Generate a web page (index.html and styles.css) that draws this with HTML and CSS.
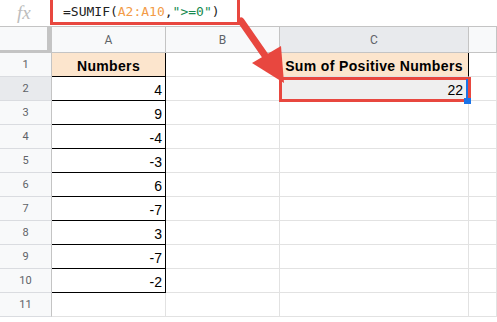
FILE: index.html
```html
<!DOCTYPE html>
<html>
<head>
<meta charset="utf-8">
<link rel="stylesheet" href="styles.css">
</head>
<body>
<div class="sheet">
  <div class="fbar">
    <span class="fx">fx</span>
    <span class="formula">=SUMIF(<span class="rng">A2:A10</span>,<span class="str">"&gt;=0"</span>)</span>
  </div>
  <div class="grid">
    <div class="corner"></div>
    <div class="hd">A</div>
    <div class="hd">B</div>
    <div class="hd sel">C</div>
    <div class="hd"></div>

    <div class="rn">1</div>
    <div class="c a peach">Numbers</div>
    <div class="c bk-r"></div>
    <div class="c peach bk-r">Sum of Positive Numbers</div>
    <div class="c"></div>

    <div class="rn sel">2</div>
    <div class="c a">4</div>
    <div class="c"></div>
    <div class="c res">22</div>
    <div class="c"></div>

    <div class="rn">3</div><div class="c a">9</div><div class="c"></div><div class="c"></div><div class="c"></div>
    <div class="rn">4</div><div class="c a">-4</div><div class="c"></div><div class="c"></div><div class="c"></div>
    <div class="rn">5</div><div class="c a">-3</div><div class="c"></div><div class="c"></div><div class="c"></div>
    <div class="rn">6</div><div class="c a">6</div><div class="c"></div><div class="c"></div><div class="c"></div>
    <div class="rn">7</div><div class="c a">-7</div><div class="c"></div><div class="c"></div><div class="c"></div>
    <div class="rn">8</div><div class="c a">3</div><div class="c"></div><div class="c"></div><div class="c"></div>
    <div class="rn">9</div><div class="c a">-7</div><div class="c"></div><div class="c"></div><div class="c"></div>
    <div class="rn">10</div><div class="c a">-2</div><div class="c"></div><div class="c"></div><div class="c"></div>
    <div class="rn">11</div><div class="c"></div><div class="c"></div><div class="c"></div><div class="c"></div>
  </div>

  <div class="hl-formula"></div>
  <div class="hl-cell"></div>
  <div class="sel-line"></div>
  <div class="sel-handle"></div>
  <svg class="arrow" width="497" height="322" viewBox="0 0 497 322">
    <line x1="241" y1="21" x2="266" y2="57" stroke="#e8473f" stroke-width="7" stroke-linecap="round"/>
    <polygon points="252,63 281,46 284,83" fill="#e8473f"/>
  </svg>
</div>
</body>
</html>
```

FILE: styles.css
```css
html, body {
  margin: 0;
  padding: 0;
  background: #ffffff;
}

.sheet {
  position: relative;
  width: 497px;
  height: 322px;
  overflow: hidden;
  font-family: "Liberation Sans", Arial, sans-serif;
}

.fbar {
  height: 26px;
  border-bottom: 1px solid #c4c4c4;
  display: flex;
  align-items: center;
  background: #ffffff;
}

.fx {
  width: 63px;
  padding-left: 17px;
  box-sizing: border-box;
  font-family: "Liberation Serif", serif;
  font-style: italic;
  font-size: 19px;
  color: #bdbdbd;
  line-height: 26px;
}

.formula {
  font-family: "DejaVu Sans Mono", monospace;
  font-size: 13px;
  color: #222222;
  line-height: 26px;
  margin-top: -2px;
}

.rng { color: #f39b47; }
.str { color: #178a4f; }

.grid {
  display: grid;
  grid-template-columns: 52px 114px 114px 189px 1fr;
  grid-template-rows: 26px;
  grid-auto-rows: 24px;
}

.corner {
  background: #f8f9fa;
  border-right: 5px solid #c4c4c4;
  border-bottom: 3px solid #c4c4c4;
  box-sizing: border-box;
}

.hd {
  background: #f8f9fa;
  border-right: 1px solid #c4c4c4;
  border-bottom: 1px solid #c4c4c4;
  box-sizing: border-box;
  display: flex;
  align-items: center;
  justify-content: center;
  font-family: Roboto, "Liberation Sans", sans-serif;
  font-size: 12px;
  color: #5f6368;
  padding-top: 1px;
}

.hd.sel { background: #e8eaed; }

.rn {
  background: #f8f9fa;
  border-right: 1px solid #c4c4c4;
  border-bottom: 1px solid #dadce0;
  box-sizing: border-box;
  display: flex;
  align-items: center;
  justify-content: center;
  font-family: Roboto, "Liberation Sans", sans-serif;
  font-size: 11px;
  color: #5f6368;
}

.rn.sel { background: #e8eaed; }

.c {
  border-right: 1px solid #e2e2e2;
  border-bottom: 1px solid #e2e2e2;
  box-sizing: border-box;
  display: flex;
  align-items: center;
  justify-content: flex-end;
  padding: 2px 3px 0 3px;
  font-size: 14px;
  color: #000000;
}

.a {
  border-right: 1px solid #000000;
  border-bottom: 1px solid #000000;
}

.bk-r { border-right: 1px solid #000000; }

.peach {
  background: #fce5cd;
  font-weight: bold;
  justify-content: center;
  font-size: 14px;
  letter-spacing: 0.35px;
}

.res {
  background: #efefef;
  padding-right: 5px;
}

.hl-formula {
  position: absolute;
  left: 50px;
  top: -4px;
  width: 190px;
  height: 29px;
  border: 3px solid #e8473f;
  box-sizing: border-box;
}

.hl-cell {
  position: absolute;
  left: 279px;
  top: 77px;
  width: 192px;
  height: 25px;
  border: 3px solid #e8473f;
  box-sizing: border-box;
}

.sel-line {
  position: absolute;
  left: 466px;
  top: 79px;
  width: 2px;
  height: 19px;
  background: #1a73e8;
}

.sel-handle {
  position: absolute;
  left: 464px;
  top: 98px;
  width: 7px;
  height: 6px;
  background: #1a73e8;
}

.arrow {
  position: absolute;
  left: 0;
  top: 0;
  pointer-events: none;
}
```
